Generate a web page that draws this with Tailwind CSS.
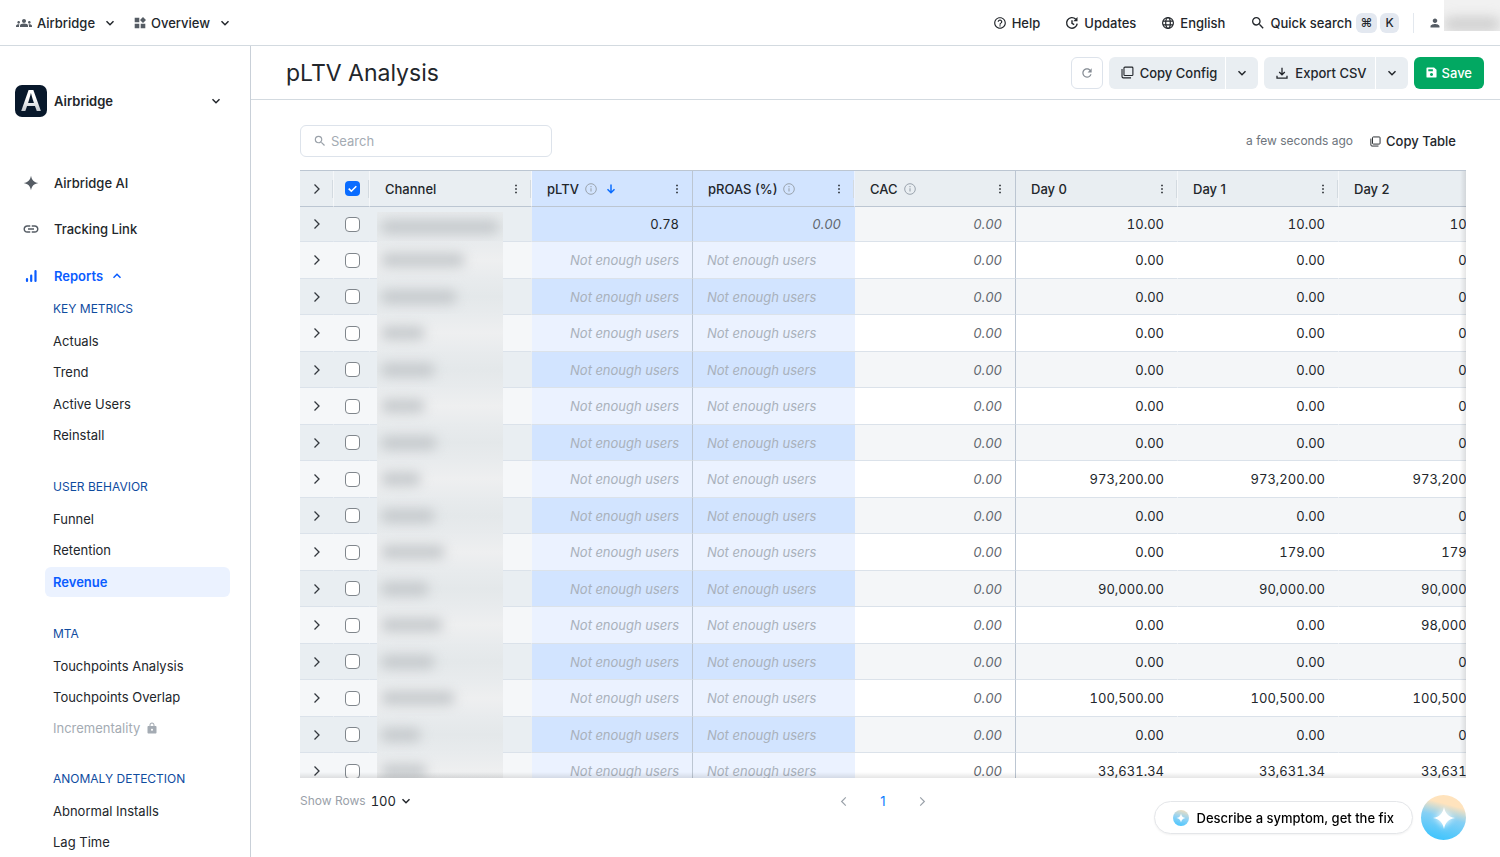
<!DOCTYPE html>
<html lang="en">
<head>
    <meta charset="UTF-8">
    <meta name="viewport" content="width=device-width, initial-scale=1.0">
    <title>pLTV Analysis - Airbridge</title>
    <script src="https://cdn.jsdelivr.net/npm/@tailwindcss/browser@4"></script>
</head>

<body class="h-screen flex flex-col overflow-hidden bg-white font-['Inter',sans-serif] text-[13px] leading-5 text-[#22262b]">
    <!-- Shared icons -->
    <svg class="hidden" aria-hidden="true">
        <symbol id="chevron" viewBox="0 0 12 12"><path d="M2.5 4.2 6 7.7l3.500-3.500" fill="none" stroke="currentColor" stroke-width="1.500"/></symbol>
        <symbol id="chevron-right" viewBox="0 0 12 12"><path d="M3.500 1.500 8 6l-4.500 4.500" fill="none" stroke="currentColor" stroke-width="1.300"/></symbol>
        <symbol id="search" viewBox="0 0 24 24"><path fill="currentColor" d="M15.5 14h-.79l-.28-.27A6.471 6.471 0 0 0 16 9.500 6.500 6.500 0 1 0 9.500 16c1.610 0 3.090-.59 4.230-1.570l.27.28v.79l5 4.990L20.490 19l-4.990-5zm-6 0C7.010 14 5 11.990 5 9.500S7.010 5 9.500 5 14 7.010 14 9.500 11.990 14 9.500 14z"/></symbol>
        <symbol id="copy" viewBox="0 0 14 14"><path d="M4.200 1.200h7.600a1 1 0 0 1 1 1v7.100a1 1 0 0 1-1 1H4.200a1 1 0 0 1-1-1V2.200a1 1 0 0 1 1-1zM1.100 3.300v8.100a1.400 1.400 0 0 0 1.400 1.400h8.300" fill="none" stroke="currentColor" stroke-width="1.200"/></symbol>
        <symbol id="info" viewBox="0 0 12 12"><circle cx="6" cy="6" r="5.300" fill="none" stroke="currentColor"/><path d="M6 5.200v3.400M6 3.100v1.100" stroke="currentColor" stroke-width="1.100"/></symbol>
        <symbol id="dots" viewBox="0 0 4 12"><path fill="currentColor" d="M1.200 1.700h1.600v1.600H1.200zM1.200 5.200h1.600v1.600H1.200zM1.200 8.700h1.600v1.600H1.200z"/></symbol>
        <symbol id="sparkle" viewBox="0 0 24 24"><path fill="currentColor" d="M12 1c1.300 6.700 4.300 9.700 11 11-6.700 1.300-9.700 4.300-11 11-1.300-6.700-4.300-9.700-11-11 6.700-1.300 9.700-4.300 11-11z"/></symbol>
    </svg>

    <!-- Top bar -->
    <header class="h-[46px] shrink-0 flex items-center justify-between pl-4 border-b border-[#d3dae0] font-medium">
        <div class="flex items-center gap-[18px]">
            <button class="flex items-center gap-[5px]">
                <svg class="size-4 text-[#555c64]" viewBox="0 0 24 24" fill="currentColor"><path d="M12 12.750c1.630 0 3.070.39 4.240.9 1.080.48 1.760 1.560 1.760 2.730V18H6v-1.610c0-1.180.68-2.260 1.760-2.730 1.170-.52 2.610-.91 4.240-.91zM4 13c1.100 0 2-.9 2-2s-.9-2-2-2-2 .9-2 2 .9 2 2 2zm1.130 1.100c-.37-.06-.74-.1-1.130-.1-.99 0-1.930.21-2.780.58C.48 14.900 0 15.620 0 16.430V18h4.500v-1.610c0-.83.23-1.610.63-2.290zM20 13c1.100 0 2-.9 2-2s-.9-2-2-2-2 .9-2 2 .9 2 2 2zm4 3.430c0-.81-.48-1.530-1.220-1.850-.85-.37-1.790-.58-2.780-.58-.39 0-.76.04-1.130.1.4.68.63 1.460.63 2.290V18H24v-1.570zM12 6c1.660 0 3 1.340 3 3s-1.340 3-3 3-3-1.340-3-3 1.340-3 3-3z"/></svg>
                <span>Airbridge</span>
                <svg class="size-3 ml-1"><use href="#chevron"/></svg>
            </button>
            <button class="flex items-center gap-[5px]">
                <svg class="size-3 text-[#555c64]" viewBox="0 0 12 12" fill="currentColor"><path d="M.7.7h4.600v4.600H.7zM.7 6.700h4.600v4.600H.7zM6.700 6.700h4.600v4.600H6.700zM9 0l3 3-3 3-3-3z"/></svg>
                <span>Overview</span>
                <svg class="size-3 ml-1"><use href="#chevron"/></svg>
            </button>
        </div>
        <div class="flex items-center">
            <button class="flex items-center gap-[5px] mr-[25px]">
                <svg class="size-[14px]" viewBox="0 0 24 24" fill="currentColor"><path d="M11 18h2v-2h-2v2zm1-16C6.480 2 2 6.480 2 12s4.480 10 10 10 10-4.480 10-10S17.520 2 12 2zm0 18c-4.410 0-8-3.590-8-8s3.590-8 8-8 8 3.590 8 8-3.590 8-8 8zm0-14c-2.210 0-4 1.790-4 4h2c0-1.100.9-2 2-2s2 .9 2 2c0 2-3 1.750-3 5h2c0-2.250 3-2.500 3-5 0-2.210-1.790-4-4-4z"/></svg>
                Help
            </button>
            <button class="flex items-center gap-[5px] mr-[25px]">
                <svg class="size-[14px]" viewBox="0 0 14 14" fill="none" stroke="currentColor" stroke-width="1.400"><path d="M12.200 7.600A5.300 5.300 0 1 1 10.600 3.100M7 4.200v3.200l2.200 1.300"/><path d="M12.500 1v4.200H8.300z" fill="currentColor" stroke="none"/></svg>
                Updates
            </button>
            <button class="flex items-center gap-[5px] mr-[25px]">
                <svg class="size-[14px]" viewBox="0 0 14 14" fill="none" stroke="currentColor" stroke-width="1.200"><circle cx="7" cy="7" r="5.400"/><ellipse cx="7" cy="7" rx="2.300" ry="5.400"/><path d="M2 5.200h10M2 8.800h10"/></svg>
                English
            </button>
            <button class="flex items-center">
                <svg class="size-4 mr-1"><use href="#search"/></svg>
                Quick search
                <kbd class="ml-1 w-[21px] h-5 rounded-md bg-[#e3e8f0] font-[Inter,'DejaVu_Sans',sans-serif] text-xs leading-5">⌘</kbd>
                <kbd class="ml-[3px] w-[19px] h-5 rounded-md bg-[#e3e8f0] font-[Inter,sans-serif] text-xs leading-5">K</kbd>
            </button>
            <span class="ml-[14px] w-px h-5 bg-[#e3e8ee]"></span>
            <button class="flex items-center ml-[15px] gap-[3px]" aria-label="Account">
                <svg class="size-3 text-[#555c64]" viewBox="0 0 24 24" fill="currentColor"><path d="M12 12c2.500 0 4.500-2 4.500-4.500S14.500 3 12 3 7.500 5 7.500 7.500 9.500 12 12 12zm0 2c-3 0-9 1.500-9 4.500V21h18v-2.500c0-3-6-4.500-9-4.500z"/></svg>
                <span class="w-14 h-[31px] mb-[14px] overflow-hidden bg-[#f1f1f1] flex items-end">
                    <span class="w-full h-[14px] rounded-md bg-[#cfcfcf] blur-[6px]"></span>
                </span>
            </button>
        </div>
    </header>

    <div class="flex-1 min-h-0 flex">
        <!-- Sidebar -->
        <aside class="w-[251px] shrink-0 overflow-hidden border-r border-[#c9d0d8]">
            <button class="flex items-center w-full mt-[39px] pl-[15px] pr-7 font-semibold">
                <span class="size-8 rounded-[7px] bg-[#08182b] flex items-center justify-center">
                    <span class="bg-linear-to-b from-white from-40% to-[#a9b0b8] bg-clip-text text-transparent text-[29px] leading-8 font-semibold">A</span>
                </span>
                <span class="ml-[7px] flex-1 text-left">Airbridge</span>
                <svg class="size-3"><use href="#chevron"/></svg>
            </button>
            <nav>
                <div class="mt-12 pl-[23px] flex flex-col gap-[11px] font-medium">
                    <a href="#" class="flex items-center h-9"><svg class="size-4 mr-[15px] text-[#555c64]"><use href="#sparkle"/></svg>Airbridge AI</a>
                    <a href="#" class="flex items-center h-9 -mt-px"><svg class="size-[18px] -ml-px mr-[14px] text-[#555c64]" viewBox="0 0 24 24" fill="currentColor"><path d="M3.900 12c0-1.710 1.390-3.100 3.100-3.100h4V7H7c-2.760 0-5 2.240-5 5s2.240 5 5 5h4v-1.900H7c-1.710 0-3.100-1.390-3.100-3.100zM8 13h8v-2H8v2zm9-6h-4v1.900h4c1.710 0 3.100 1.390 3.100 3.100s-1.390 3.100-3.100 3.100h-4V17h4c2.760 0 5-2.240 5-5s-2.240-5-5-5z"/></svg>Tracking Link</a>
                    <a href="#" class="flex items-center h-9 text-[#0a5cff] font-semibold"><svg class="size-4 mr-[15px]" viewBox="0 0 16 16" fill="none" stroke="currentColor" stroke-width="2.200" stroke-linecap="round"><path d="M4 11v2M8.200 7.500V13M12.500 3v10"/></svg>Reports<svg class="size-3 ml-2 rotate-180"><use href="#chevron"/></svg></a>
                </div>
                <div id="menu" class="mt-[5px] flex flex-col gap-[27px] pl-[45px] pr-5"></div>
            </nav>
        </aside>

        <!-- Report -->
        <main class="flex-1 min-w-0 flex flex-col">
            <div class="h-[54px] shrink-0 flex items-center justify-between pl-[35px] pr-4 border-b border-[#d3dae0]">
                <h1 class="text-[23px] leading-8">pLTV Analysis</h1>
                <div class="flex items-center gap-[6px] font-medium">
                    <button class="size-8 rounded-md border border-[#dde3eb] flex items-center justify-center" aria-label="Refresh">
                        <svg class="size-[14px] text-[#858c94]" viewBox="0 0 24 24" fill="currentColor"><path d="M17.650 6.350C16.200 4.900 14.210 4 12 4c-4.420 0-7.990 3.580-7.990 8s3.570 8 7.990 8c3.730 0 6.840-2.550 7.730-6h-2.080c-.82 2.330-3.040 4-5.650 4-3.310 0-6-2.690-6-6s2.690-6 6-6c1.660 0 3.140.69 4.220 1.780L13 11h7V4l-2.350 2.350z"/></svg>
                    </button>
                    <div class="flex gap-px">
                        <button class="h-8 pl-3 pr-2 rounded-l-md bg-[#e9eef2] flex items-center gap-[6px]"><svg class="size-[13px]"><use href="#copy"/></svg>Copy Config</button>
                        <button class="size-8 rounded-r-md bg-[#e9eef2] flex items-center justify-center" aria-label="More copy options"><svg class="size-3"><use href="#chevron"/></svg></button>
                    </div>
                    <div class="flex gap-px">
                        <button class="h-8 pl-3 pr-2 rounded-l-md bg-[#e9eef2] flex items-center gap-[7px]"><svg class="size-3" viewBox="0 0 12 12" fill="none" stroke="currentColor" stroke-width="1.300"><path d="M6 .8v6.800M3.200 5l2.800 2.800L8.800 5M1 8.800v2.400h10V8.800"/></svg>Export CSV</button>
                        <button class="size-8 rounded-r-md bg-[#e9eef2] flex items-center justify-center" aria-label="More export options"><svg class="size-3"><use href="#chevron"/></svg></button>
                    </div>
                    <button class="h-8 px-3 rounded-md bg-[#02a862] text-white flex items-center gap-[5px]"><svg class="size-[11px]" viewBox="0 0 12 12"><path fill="currentColor" fill-rule="evenodd" d="M1.500.5h7.300L11.500 3v7.500a1 1 0 0 1-1 1h-9a1 1 0 0 1-1-1v-9a1 1 0 0 1 1-1zM2.500 2.500v2h5v-2zM6 6.500a1.700 1.700 0 1 0 .01 0z"/></svg>Save</button>
                </div>
            </div>

            <div class="flex-1 min-h-0 flex flex-col pl-[49px] pr-[34px] pt-[25px]">
                <div class="flex items-center justify-between">
                    <label class="relative flex items-center">
                        <svg class="absolute left-[13px] size-[14px] text-[#9aa1a9]"><use href="#search"/></svg>
                        <input type="text" placeholder="Search" aria-label="Search" class="w-[252px] h-8 pl-[30px] rounded-md border border-[#dde3eb] placeholder:text-[#a4abb3]">
                    </label>
                    <div class="flex items-center pr-[10px]">
                        <span class="text-xs text-[#6d747c]">a few seconds ago</span>
                        <button class="ml-[17px] flex items-center gap-[5px] font-medium"><svg class="size-[11px]"><use href="#copy"/></svg>Copy Table</button>
                    </div>
                </div>

                <div class="relative mt-[13px] flex-1 min-h-0 overflow-hidden border-t border-[#bcc6d2]">
                    <table class="w-[1201px] table-fixed border-separate border-spacing-0">
                        <colgroup>
                            <col class="w-[34px]"><col class="w-9"><col class="w-[162px]"><col class="w-[161px]"><col class="w-[162px]"><col class="w-[161px]"><col class="w-[162px]"><col class="w-[161px]"><col class="w-[162px]">
                        </colgroup>
                        <thead><tr id="head" class="h-9"></tr></thead>
                        <tbody id="rows"></tbody>
                    </table>
                    <div class="absolute inset-y-0 right-0 w-[6px] bg-linear-to-l from-black/10 to-transparent pointer-events-none"></div>
                    <div class="absolute inset-x-0 bottom-0 h-[6px] bg-linear-to-t from-black/10 to-transparent pointer-events-none"></div>
                </div>

                <div class="h-[79px] shrink-0 grid grid-cols-3 items-start pt-3">
                    <label class="flex items-center text-xs text-[#9aa1a9]">Show Rows
                        <span class="relative flex items-center ml-[5px]">
                            <select class="appearance-none pr-[15px] text-[13px] leading-[22px] text-[#22262b] tabular-nums"><option>100</option><option>50</option></select>
                            <svg class="absolute right-0 size-3 text-[#22262b] pointer-events-none"><use href="#chevron"/></svg>
                        </span>
                    </label>
                    <div class="flex items-center justify-center gap-[31px] leading-[22px] text-[#0a7cff]">
                        <button aria-label="Previous page"><svg class="size-[11px] rotate-180 text-[#9aa1a9]"><use href="#chevron-right"/></svg></button>
                        <button>1</button>
                        <button aria-label="Next page"><svg class="size-[11px] text-[#9aa1a9]"><use href="#chevron-right"/></svg></button>
                    </div>
                </div>
            </div>
        </main>
    </div>

    <!-- Assistant -->
    <div class="fixed right-[34px] bottom-[17px] flex items-center gap-2">
        <button class="h-[33px] px-[18px] rounded-full border border-[#e4e6e9] bg-white flex items-center gap-2 font-medium text-black shadow-xs">
            <span class="size-4 rounded-full bg-linear-[15deg,#3fc4ff,#8fd2f5_50%,#ffe0b8] flex items-center justify-center text-white"><svg class="size-[10px]"><use href="#sparkle"/></svg></span>
            Describe a symptom, get the fix
        </button>
        <button class="size-[45px] rounded-full bg-linear-[15deg,#30c2ff,#86d0f5_50%,#ffe3bd_75%] flex items-center justify-center text-white" aria-label="Open assistant"><svg class="size-6 drop-shadow-[0_0_3px_#ffffff]"><use href="#sparkle"/></svg></button>
    </div>

    <script>
        const menu = [
            ["KEY METRICS", ["Actuals", "Trend", "Active Users", "Reinstall"]],
            ["USER BEHAVIOR", ["Funnel", "Retention", "Revenue"]],
            ["MTA", ["Touchpoints Analysis", "Touchpoints Overlap", "Incrementality"]],
            ["ANOMALY DETECTION", ["Abnormal Installs", "Lag Time"]],
        ];
        const lock = `<svg class="size-3 ml-[6px]" viewBox="0 0 24 24" fill="currentColor"><path d="M19 8h-2V6c0-2.760-2.240-5-5-5S7 3.240 7 6v2H5c-1.100 0-2 .9-2 2v11c0 1.100.9 2 2 2h14c1.100 0 2-.9 2-2V10c0-1.100-.9-2-2-2zm-7 9.500c-1.100 0-2-.9-2-2s.9-2 2-2 2 .9 2 2-.9 2-2 2zM9 8V6a3 3 0 0 1 6 0v2H9z"/></svg>`;

        function menuItem(name) {
            if (name === "Revenue") {
                return `<li class="mt-[2px]"><a href="#" class="flex items-center h-[30px] pl-2 rounded-md bg-[#ebf2ff] text-[#0a5cff] font-semibold">${name}</a></li>`;
            }
            if (name === "Incrementality") {
                return `<li class="mt-[2px]"><a href="#" class="flex items-center h-7 pl-2 text-[#a4abb3]">${name}${lock}</a></li>`;
            }
            return `<li class="mt-[2px] even:mt-px first:mt-0"><a href="#" class="flex items-center h-[30px] pl-2">${name}</a></li>`;
        }

        document.getElementById("menu").innerHTML = menu.map(([title, items]) => `
            <section>
                <h2 class="pl-2 text-xs leading-5 text-[#0f4c9f]">${title}</h2>
                <ul class="mt-[7px]">${items.map(menuItem).join("")}</ul>
            </section>
        `).join("");

        // Table head
        const arrow = `<svg class="size-[10px] ml-[9px] text-[#0a6cff]" viewBox="0 0 10 10" fill="none" stroke="currentColor" stroke-width="1.500"><path d="M5 .5v8M1.500 5.200 5 8.700l3.500-3.500"/></svg>`;
        const columns = [
            { name: "Channel", bg: "bg-[#e9eef2] border-r-[#f5f7f9]" },
            { name: "pLTV", info: true, sorted: true, bg: "bg-[#d2e4ff] border-r-[#bcc6d2]" },
            { name: "pROAS (%)", info: true, bg: "bg-[#d2e4ff] border-r-[#ebf2ff]" },
            { name: "CAC", info: true, bg: "bg-[#e9eef2] border-r-[#bcc6d2]" },
            { name: "Day 0", bg: "bg-[#e9eef2] border-r-[#f5f7f9]" },
            { name: "Day 1", bg: "bg-[#e9eef2] border-r-[#f5f7f9]" },
            { name: "Day 2", bg: "bg-[#e9eef2] border-r-[#f5f7f9]" },
        ];
        const expand = `<button class="block mx-auto" aria-label="Expand"><svg class="size-3 text-[#33383e]"><use href="#chevron-right"/></svg></button>`;
        const handle = `<span class="absolute right-0 top-[9px] w-px h-[18px] bg-[#d3dae0]"></span>`;

        document.getElementById("head").innerHTML = `
            <th class="relative bg-[#e9eef2] border-b border-b-[#bcc6d2] border-r border-r-[#f5f7f9]">${expand}${handle}</th>
            <th class="relative bg-[#e9eef2] border-b border-b-[#bcc6d2] border-r border-r-[#f5f7f9]">
                <label class="relative block size-[15px] ml-[11px]">
                    <input type="checkbox" checked aria-label="Select all" class="block appearance-none size-[15px] rounded-[4px] bg-[#0a6cff]">
                    <svg class="absolute inset-0 size-[15px] text-white pointer-events-none" viewBox="0 0 15 15" fill="none" stroke="currentColor" stroke-width="1.600"><path d="M3.700 7.700 6.300 10.200l5-5"/></svg>
                </label>${handle}
            </th>
        ` + columns.map(c => `
            <th class="relative pl-[15px] pr-[13px] border-b border-b-[#bcc6d2] border-r font-medium ${c.bg}">
                <div class="flex items-center">
                    ${c.name}
                    ${c.info ? `<svg class="size-3 ml-[6px] text-[#9aa3ad]"><use href="#info"/></svg>` : ""}
                    ${c.sorted ? arrow : ""}
                    <button class="ml-auto" aria-label="Column menu"><svg class="w-1 h-3"><use href="#dots"/></svg></button>
                </div>
                ${c.bg.includes("border-r-[#bcc6d2]") ? "" : handle}
            </th>
        `).join("");

        // Table rows: width of the hidden channel name, then the day values
        const rows = [
            [118, "10.00", "10.00", "10.00"],
            [84, "0.00", "0.00", "0.00"],
            [76, "0.00", "0.00", "0.00"],
            [44, "0.00", "0.00", "0.00"],
            [54, "0.00", "0.00", "0.00"],
            [44, "0.00", "0.00", "0.00"],
            [56, "0.00", "0.00", "0.00"],
            [40, "973,200.00", "973,200.00", "973,200.00"],
            [54, "0.00", "0.00", "0.00"],
            [64, "0.00", "179.00", "179.00"],
            [48, "90,000.00", "90,000.00", "90,000.00"],
            [62, "0.00", "0.00", "98,000.00"],
            [54, "0.00", "0.00", "0.00"],
            [74, "100,500.00", "100,500.00", "100,500.00"],
            [40, "0.00", "0.00", "0.00"],
            [46, "33,631.34", "33,631.34", "33,631.34"],
        ];
        const cell = "px-[13px] border-b border-b-[#dbe2ea] border-r border-r-transparent text-right";
        const few = `<i class="text-[#a9b1bb]">Not enough users</i>`;

        document.getElementById("rows").innerHTML = rows.map(([nameWidth, ...days], i) => {
            const odd = i % 2 === 0;
            const side = odd ? "bg-[#e9eef2]" : "bg-[#f5f7f9]";
            const blue = odd ? "bg-[#d2e4ff]" : "bg-[#ebf2ff]";
            const plain = odd ? "bg-[#f4f6f8]" : "bg-white";
            const mask = odd ? "bg-linear-to-b from-[#e8ebed] via-[#e4e8ea] to-[#e8ebed]" : "bg-linear-to-b from-[#e8ebed] via-[#eeeff0] to-[#e8ebed]";
            return `
                <tr class="h-9 even:h-[37px] first:h-[35px]">
                    <td class="border-b border-b-[#dbe2ea] border-r border-r-transparent ${side}">${expand}</td>
                    <td class="border-b border-b-[#dbe2ea] border-r border-r-transparent ${side}">
                        <input type="checkbox" aria-label="Select row" class="block ml-[11px] appearance-none size-[15px] rounded-[4px] border border-[#80868c] bg-white">
                    </td>
                    <td class="relative border-b border-b-[#dbe2ea] border-r border-r-transparent ${side}">
                        <div class="absolute -bottom-px left-[7px] w-[126px] overflow-hidden flex items-center pl-1 ${i ? "-top-px" : "top-[5px]"} ${mask}">
                            <div class="h-[14px] rounded-lg bg-[#c6cacd] blur-[6px]" style="width:${nameWidth}px"></div>
                        </div>
                    </td>
                    <td class="px-[13px] border-b border-b-[#dbe2ea] border-r border-r-[#bcc6d2] text-right tabular-nums ${blue}">${i ? few : "0.78"}</td>
                    ${i
                        ? `<td class="px-[14px] border-b border-b-[#dbe2ea] ${blue}">${few}</td>`
                        : `<td class="${cell} ${blue}"><i class="tabular-nums text-[#5f666e]">0.00</i></td>`}
                    <td class="px-[13px] border-b border-b-[#dbe2ea] border-r border-r-[#bcc6d2] text-right tabular-nums ${plain}"><i class="text-[#5f666e]">0.00</i></td>
                    ${days.map(d => `<td class="${cell} tabular-nums ${plain}">${d}</td>`).join("")}
                </tr>
            `;
        }).join("");
    </script>
</body>
</html>
